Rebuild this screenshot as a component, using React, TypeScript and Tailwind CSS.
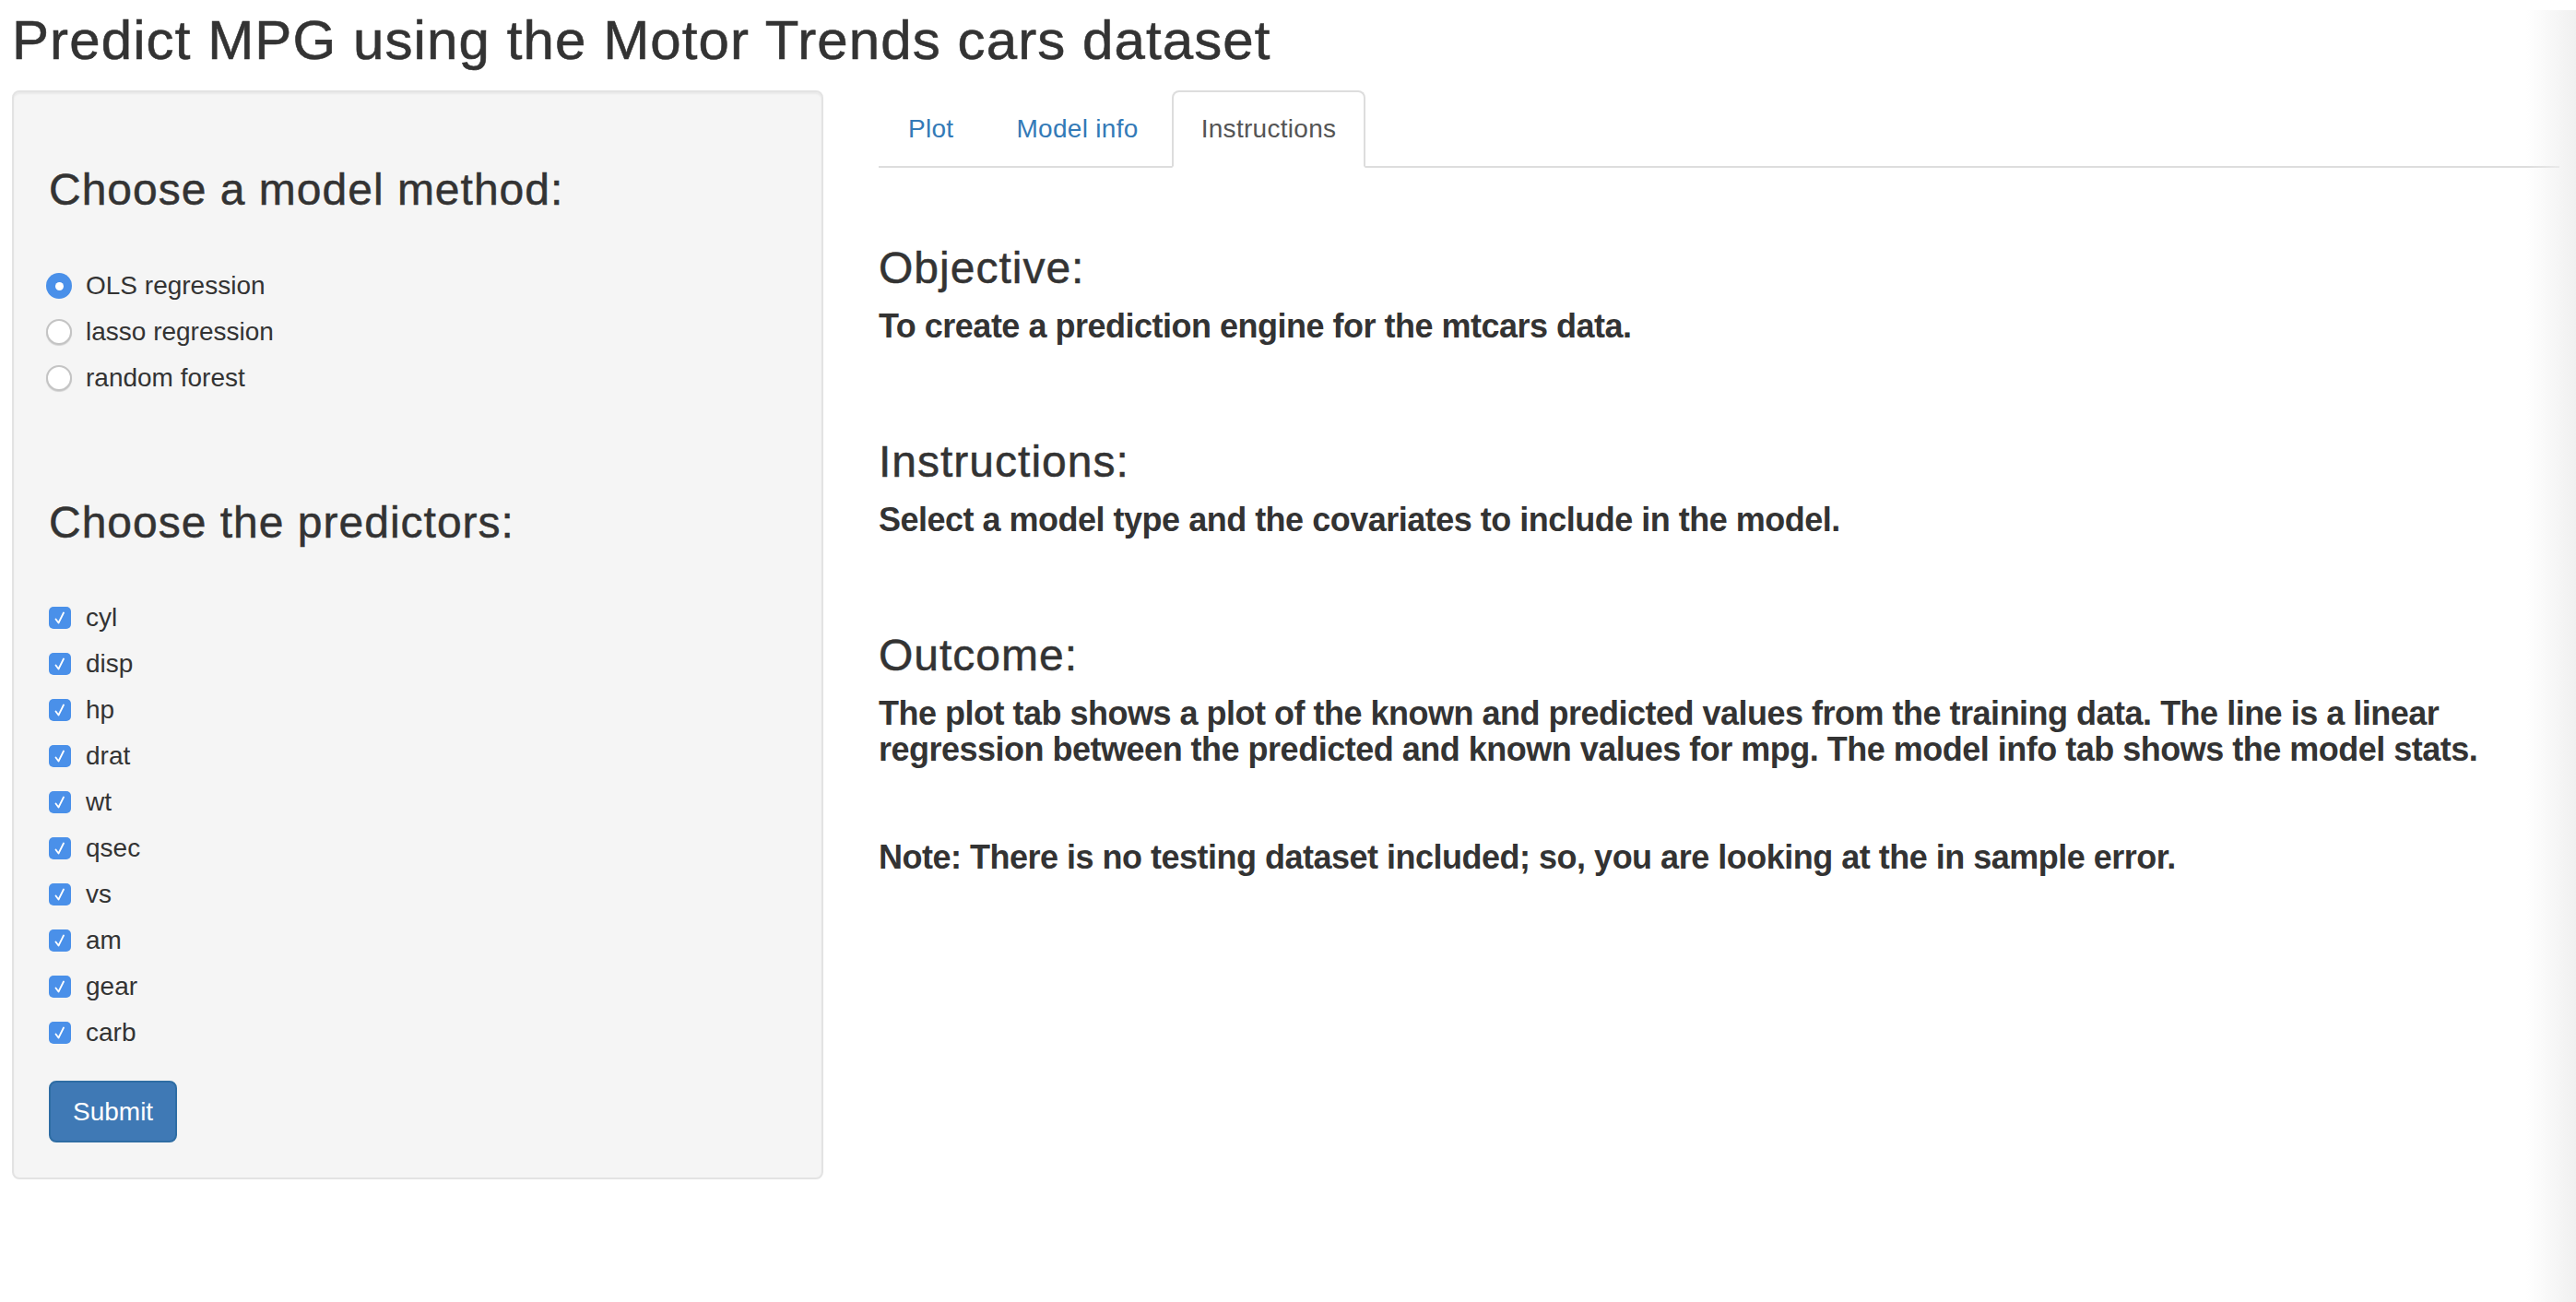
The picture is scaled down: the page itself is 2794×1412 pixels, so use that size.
import React from 'react';

const methods = ['OLS regression', 'lasso regression', 'random forest'];
const predictors = ['cyl', 'disp', 'hp', 'drat', 'wt', 'qsec', 'vs', 'am', 'gear', 'carb'];
const tabs = ['Plot', 'Model info', 'Instructions'];

function Radio({ checked }: { checked: boolean }) {
  if (checked) {
    return (
      <span className="flex h-[28px] w-[28px] shrink-0 items-center justify-center rounded-full bg-[#4a90e9]">
        <span className="block h-[9px] w-[9px] rounded-full bg-white" />
      </span>
    );
  }
  return (
    <span className="block h-[28px] w-[28px] shrink-0 rounded-full border-2 border-[#c4c4c4] bg-white shadow-[0_1px_1px_rgba(0,0,0,0.15)]" />
  );
}

function Checkbox() {
  return (
    <span className="flex h-[24px] w-[24px] shrink-0 items-center justify-center rounded-[5px] bg-[#4a90e9]">
      <svg width="14" height="16" viewBox="0 0 14 16" fill="none">
        <path d="M2.5 9.5 L5.5 13.5 L11 2.5" stroke="white" strokeWidth="1.8" strokeLinecap="round" strokeLinejoin="round" />
      </svg>
    </span>
  );
}

export default function App() {
  const active = 'Instructions';
  const h3 = 'text-[48px] leading-[53px] font-normal tracking-[1px] [-webkit-text-stroke:0.5px_#333]';
  const h4 = 'text-[36px] leading-[39px] font-bold tracking-[-0.5px]';

  return (
    <div className="relative min-h-[1412px] bg-white pl-[13px] pr-[18px] font-['Liberation_Sans',Arial,sans-serif] text-[#333]">
      <h1 className="mt-[11px] text-[60px] leading-[66px] font-normal tracking-[1.1px] [-webkit-text-stroke:0.6px_#333]">
        Predict MPG using the Motor Trends cars dataset
      </h1>

      <div className="mt-[21px] flex gap-[60px]">
        {/* sidebar */}
        <div className="w-[880px] shrink-0 self-start rounded-[8px] border-2 border-[#e3e3e3] bg-[#f5f5f5] px-[38px] pt-[38px] pb-[38px] shadow-[inset_0_2px_2px_rgba(0,0,0,0.05)]">
          <h3 className={`mt-[41px] ${h3}`}>Choose a model method:</h3>
          <div className="mt-[58px] flex flex-col gap-[10px]">
            {methods.map((m, i) => (
              <label key={m} className="flex h-[40px] items-center gap-[15px] text-[28px] leading-[40px]">
                <span className="-ml-[3px] block">
                  <Radio checked={i === 0} />
                </span>
                <span>{m}</span>
              </label>
            ))}
          </div>

          <h3 className={`mt-[110px] ${h3}`}>Choose the predictors:</h3>
          <div className="mt-[57px] flex flex-col gap-[10px]">
            {predictors.map(p => (
              <label key={p} className="flex h-[40px] items-center gap-[16px] text-[28px] leading-[40px]">
                <Checkbox />
                <span>{p}</span>
              </label>
            ))}
          </div>

          <button className="mt-[32px] h-[67px] rounded-[8px] border-2 border-[#2e6da4] bg-[#3f79b5] px-[24px] text-[28px] leading-[40px] text-white">
            Submit
          </button>
        </div>

        {/* main panel */}
        <div className="min-w-0 flex-1">
          <ul className="flex border-b-2 border-[#ddd]">
            {tabs.map(t => (
              <li key={t} className="-mb-[2px] mr-[4px]">
                <span
                  className={
                    t === active
                      ? 'block rounded-t-[8px] border-2 border-[#ddd] border-b-white bg-white px-[30px] py-[20px] text-[28px] leading-[40px] tracking-[0.3px] text-[#555]'
                      : 'block rounded-t-[8px] border-2 border-transparent px-[30px] py-[20px] text-[28px] leading-[40px] tracking-[0.3px] text-[#337ab7]'
                  }
                >
                  {t}
                </span>
              </li>
            ))}
          </ul>

          <h3 className={`mt-[82px] ${h3}`}>Objective:</h3>
          <h4 className={`mt-[17px] ${h4}`}>To create a prediction engine for the mtcars data.</h4>

          <h3 className={`mt-[101px] ${h3}`}>Instructions:</h3>
          <h4 className={`mt-[17px] ${h4}`}>Select a model type and the covariates to include in the model.</h4>

          <h3 className={`mt-[101px] ${h3}`}>Outcome:</h3>
          <h4 className={`mt-[17px] ${h4}`}>
            The plot tab shows a plot of the known and predicted values from the training data. The line is a linear
            regression between the predicted and known values for mpg. The model info tab shows the model stats.
          </h4>

          <h4 className={`mt-[78px] ${h4}`}>
            Note: There is no testing dataset included; so, you are looking at the in sample error.
          </h4>
        </div>
      </div>

      <div className="pointer-events-none absolute right-0 top-0 h-full w-[54px] bg-gradient-to-r from-white/0 to-[#f0f0f0]" />
    </div>
  );
}
